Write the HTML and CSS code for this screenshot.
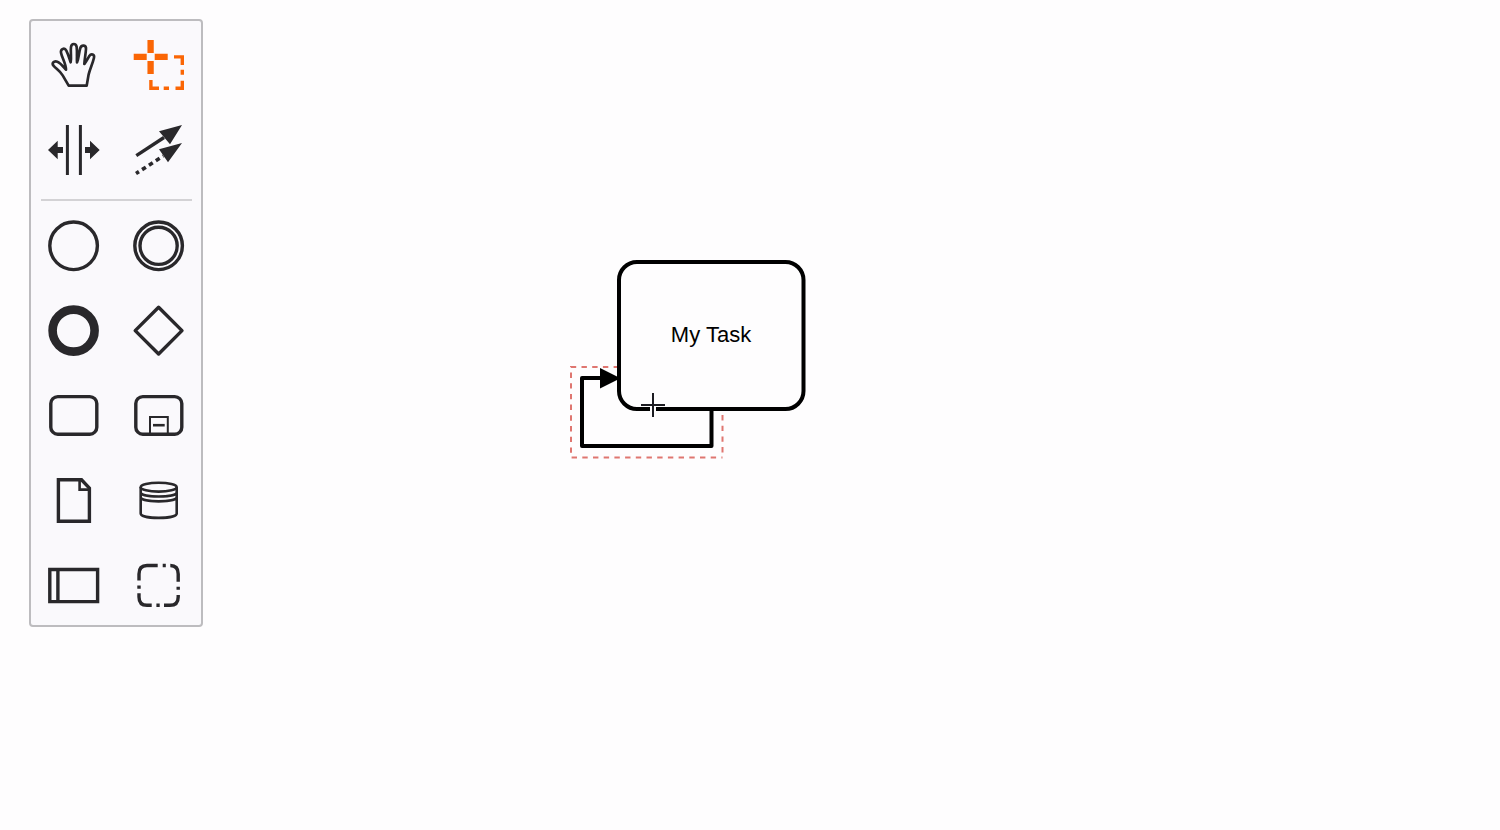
FILE: index.html
```html
<!DOCTYPE html>
<html lang="en">
<head>
<meta charset="utf-8">
<title>Diagram editor</title>
<link rel="stylesheet" href="styles.css">
</head>
<body>
<main class="editor">
  <div class="palette" role="toolbar" aria-label="Tools">
    <div class="group">
      <button class="entry" type="button" aria-label="Hand tool">
        <svg viewBox="0 0 85 85"><g transform="translate(13 14) scale(.3333)"><path stroke-width="8" stroke-linejoin="round" d="M74 149L56 118C48 105 36 98 29 90C22 82 29 74 40 77C49 80 58 92 66 101C66 82 54 66 51 50C49 38 62 34 67 44C73 56 76 68 80 79C83 65 79 48 81 33C83 21 96 21 98 33C100 48 98 65 99 79C105 66 104 51 109 36C113 25 127 27 126 39C125 54 122 69 121 84C128 76 131 68 136 60C142 51 152 56 150 65C146 83 138 98 134 115L128 149Z"/></g></svg>
      </button>
      <button class="entry active" type="button" aria-label="Lasso tool" aria-pressed="true">
        <svg viewBox="0 0 85 85"><path stroke-width="6.3" d="M34.6 18V31M34.6 39V52M17.7 34.8H30.7M38.7 34.8H51.7"/><path d="M58 34.9H66.3V43M66.3 47.7V52.7M66.3 58.7V66.3H59.5M53 66.3H47.7M43 66.3H34.9V58"/></svg>
      </button>
      <button class="entry" type="button" aria-label="Space tool">
        <svg viewBox="0 0 85 85"><path stroke-width="3" d="M36.4 18V68M49.4 18V68"/><path class="solid" d="M17 43L26.7 33.8V40H32V46H26.7V52.2ZM68.7 43L59 33.8V40H54V46H59V52.2Z"/></svg>
      </button>
      <button class="entry" type="button" aria-label="Connect tool">
        <svg viewBox="0 0 85 85"><path d="M20.3 48.7L48 30.5"/><path stroke-width="3.6" stroke-dasharray="4.5 3.7" stroke-dashoffset="1" d="M20 66.5L47.3 49"/><path class="solid" d="M66 18L43 24.3L54 37.3ZM66 36L43 42.3L52 55.3Z"/></svg>
      </button>
    </div>
    <hr class="separator">
    <div class="group shapes">
      <button class="entry" type="button" aria-label="Start event">
        <svg viewBox="0 0 85 85"><circle cx="42.6" cy="42.8" r="23.8"/></svg>
      </button>
      <button class="entry" type="button" aria-label="Intermediate event">
        <svg viewBox="0 0 85 85"><circle cx="42.6" cy="42.8" r="23.8"/><circle cx="42.6" cy="42.8" r="18.6"/></svg>
      </button>
      <button class="entry" type="button" aria-label="End event">
        <svg viewBox="0 0 85 85"><circle cx="42.6" cy="42.6" r="21" stroke-width="8.6"/></svg>
      </button>
      <button class="entry" type="button" aria-label="Gateway">
        <svg viewBox="0 0 85 85"><path stroke-linejoin="round" d="M42.6 19.2L66 42.6L42.6 66L19.2 42.6Z"/></svg>
      </button>
      <button class="entry" type="button" aria-label="Task">
        <svg viewBox="0 0 85 85"><rect x="19.8" y="23.6" width="46" height="37.6" rx="7"/></svg>
      </button>
      <button class="entry" type="button" aria-label="Sub-process">
        <svg viewBox="0 0 85 85"><rect x="19.8" y="23.6" width="46" height="37.6" rx="7"/><path stroke-width="2" d="M34 61V44H51.8V61"/><path stroke-width="2.6" d="M37 52.2H48.7"/></svg>
      </button>
      <button class="entry" type="button" aria-label="Data object">
        <svg viewBox="0 0 85 85"><path d="M27.4 21.8H50.5L58.4 30.2V63.2H27.4Z"/><path stroke-width="2.6" d="M48.6 22V31.6H58.4"/></svg>
      </button>
      <button class="entry" type="button" aria-label="Data store">
        <svg viewBox="0 0 85 85"><g stroke-width="2.6"><ellipse cx="42.7" cy="29.2" rx="18" ry="4.4"/><path d="M24.7 29V55.4C24.7 61.4 60.7 61.4 60.7 55.4V29M24.7 34.2C24.7 40 60.7 40 60.7 34.2M24.7 39C24.7 44.8 60.7 44.8 60.7 39"/></g></svg>
      </button>
      <button class="entry" type="button" aria-label="Pool">
        <svg viewBox="0 0 85 85"><path d="M18.8 26.5H66.6V58.6H18.8ZM26.9 26.5V58.6"/></svg>
      </button>
      <button class="entry" type="button" aria-label="Group">
        <svg viewBox="0 0 85 85"><path d="M23 37.5V31Q23 22.5 31 22.5H41.7M46.7 22.5H49.8M54.3 22.5Q62.2 22.5 62.2 31V38.7M62.2 43.7V46.8M62.2 52V54Q62.2 62.3 54 62.3H48M43.7 62.3H40.4M35.7 62.3H31Q23 62.3 23 54V50.3M23 45.7V42.4"/></svg>
      </button>
    </div>
  </div>

  <svg class="diagram" width="260" height="220" viewBox="560 250 260 220" role="img" aria-label="My Task with a loop connection">
    <path class="outline" d="M619 367H571V457.5H722.5M722.5 415V457.5"/>
    <rect class="task" x="619" y="262" width="184.5" height="147" rx="18"/>
    <path class="connection" d="M711.5 410V446H582V378H602"/>
    <path d="M600 368V388.5L620.5 378.2Z"/>
    <text class="task-label" x="711" y="342">My Task</text>
    <path class="halo" d="M653 393V417"/>
    <path class="crosshair" d="M641 405H665M653 393V417"/>
  </svg>
</main>
</body>
</html>
```
FILE: styles.css
```css
body {
  margin: 0;
  background: #fefdfe;
  font-family: "Liberation Sans", Arial, sans-serif;
}

.editor {
  position: relative;
  box-sizing: border-box;
  min-height: 100vh;
  padding: 19px 29px;
  overflow: hidden;
}

.palette {
  box-sizing: border-box;
  width: max-content;
  padding-top: 1px;
  border: 2px solid #bdbcbf;
  border-radius: 4px;
  background: #faf9fc;
}

.group {
  display: grid;
  grid-template-columns: 85px 85px;
}

.shapes {
  margin-bottom: -3px;
}

.separator {
  height: 2px;
  margin: 7px 9px 2px 10px;
  border: 0;
  background: #d3d2d5;
}

.entry {
  height: 85px;
  padding: 0;
  border: 0;
  background: none;
  color: #29282b;
}

.entry.active {
  color: #fa6605;
}

.entry svg {
  display: block;
  width: 85px;
  height: 85px;
  fill: none;
  stroke: currentColor;
  stroke-width: 3.4;
}

.entry .solid {
  fill: currentColor;
  stroke: none;
}

.diagram {
  position: absolute;
  left: 560px;
  top: 250px;
}

.outline {
  fill: none;
  stroke: #df7670;
  stroke-width: 2px;
  stroke-dasharray: 5.4 5.3;
}

.task {
  fill: #fefdfe;
  stroke: #000;
  stroke-width: 4px;
}

.connection {
  fill: none;
  stroke: #000;
  stroke-width: 4px;
  stroke-linejoin: round;
}

.task-label {
  font-size: 22px;
  text-anchor: middle;
}

.halo {
  stroke: #fefdfe;
  stroke-width: 6px;
}

.crosshair {
  fill: none;
  stroke: #1c1c22;
  stroke-width: 2px;
}
```
